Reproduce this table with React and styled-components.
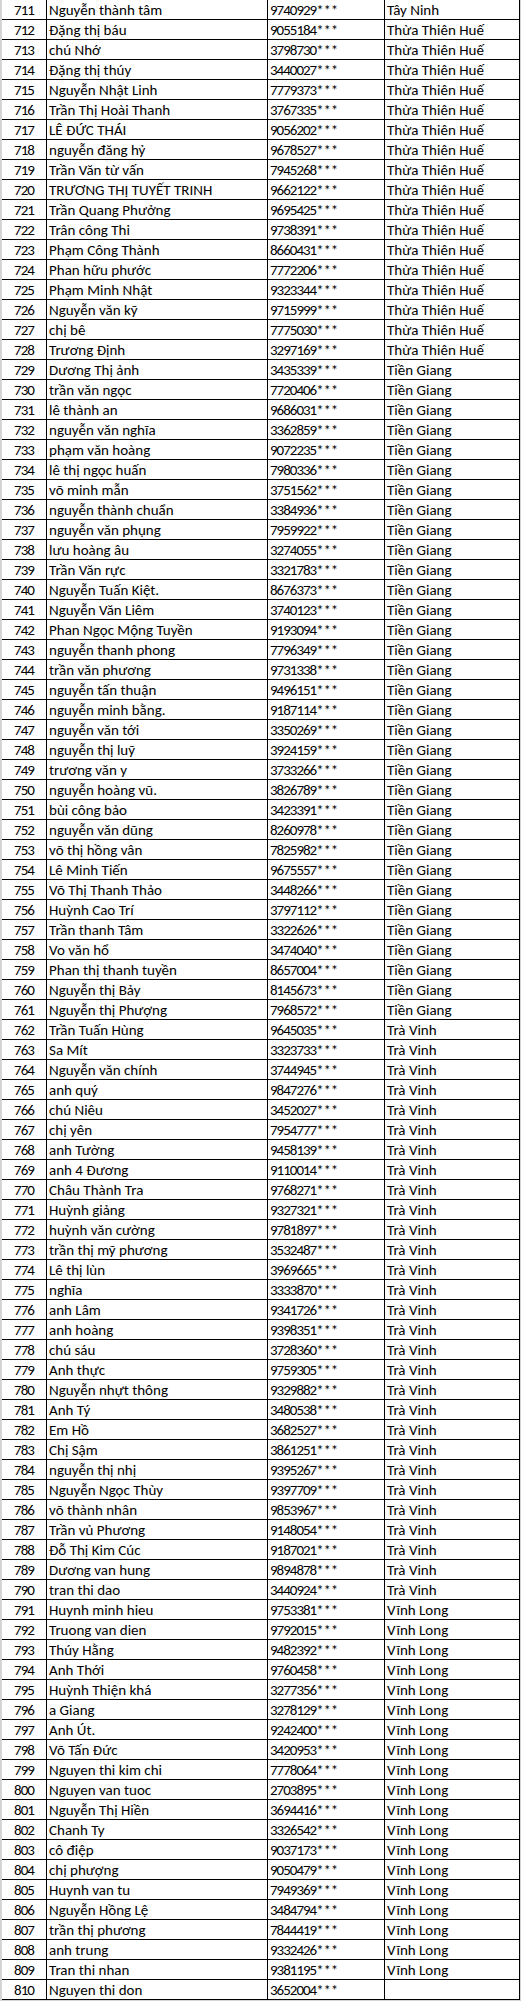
import React from 'react'
import styled, { createGlobalStyle } from 'styled-components'

const GlobalStyle = createGlobalStyle`
  html, body {
    margin: 0;
    padding: 0;
    background: #d4d4d4;
  }
`

const TTH = 'Thừa Thiên Huế'
const TG = 'Tiền Giang'
const TV = 'Trà Vinh'
const VL = 'Vĩnh Long'

// ho ten | so dien thoai (an 3 so cuoi) | tinh ; stt bat dau tu 711
const rows = [
  ['Nguyễn thành tâm', '9740929', 'Tây Ninh'],
  ['Đặng thị báu', '9055184', TTH],
  ['chú Nhớ', '3798730', TTH],
  ['Đặng thị thúy', '3440027', TTH],
  ['Nguyễn Nhật Linh', '7779373', TTH],
  ['Trần Thị Hoài Thanh', '3767335', TTH],
  ['LÊ ĐỨC THÁI', '9056202', TTH],
  ['nguyễn đăng hỷ', '9678527', TTH],
  ['Trần Văn từ vấn', '7945268', TTH],
  ['TRƯƠNG THỊ TUYẾT TRINH', '9662122', TTH],
  ['Trần Quang Phưởng', '9695425', TTH],
  ['Trân công Thi', '9738391', TTH],
  ['Phạm Công Thành', '8660431', TTH],
  ['Phan hữu phước', '7772206', TTH],
  ['Phạm Minh Nhật', '9323344', TTH],
  ['Nguyễn văn kỹ', '9715999', TTH],
  ['chị bê', '7775030', TTH],
  ['Trương Định', '3297169', TTH],
  ['Dương Thị ảnh', '3435339', TG],
  ['trần văn ngọc', '7720406', TG],
  ['lê thành an', '9686031', TG],
  ['nguyễn văn nghĩa', '3362859', TG],
  ['phạm văn hoàng', '9072235', TG],
  ['lê thị ngọc huấn', '7980336', TG],
  ['võ minh mẫn', '3751562', TG],
  ['nguyễn thành chuẩn', '3384936', TG],
  ['nguyễn văn phụng', '7959922', TG],
  ['lưu hoàng âu', '3274055', TG],
  ['Trần Văn rực', '3321783', TG],
  ['Nguyễn Tuấn Kiệt.', '8676373', TG],
  ['Nguyễn Văn Liêm', '3740123', TG],
  ['Phan Ngọc Mộng Tuyền', '9193094', TG],
  ['nguyễn thanh phong', '7796349', TG],
  ['trần văn phương', '9731338', TG],
  ['nguyễn tấn thuận', '9496151', TG],
  ['nguyễn minh bằng.', '9187114', TG],
  ['nguyễn văn tới', '3350269', TG],
  ['nguyễn thị luỹ', '3924159', TG],
  ['trương văn y', '3733266', TG],
  ['nguyễn hoàng vũ.', '3826789', TG],
  ['bùi công bảo', '3423391', TG],
  ['nguyễn văn dũng', '8260978', TG],
  ['võ thị hồng vân', '7825982', TG],
  ['Lê Minh Tiến', '9675557', TG],
  ['Võ Thị Thanh Thảo', '3448266', TG],
  ['Huỳnh Cao Trí', '3797112', TG],
  ['Trần thanh Tâm', '3322626', TG],
  ['Vo văn hổ', '3474040', TG],
  ['Phan thị thanh tuyền', '8657004', TG],
  ['Nguyễn thị Bảy', '8145673', TG],
  ['Nguyễn thị Phượng', '7968572', TG],
  ['Trần Tuấn Hùng', '9645035', TV],
  ['Sa Mít', '3323733', TV],
  ['Nguyễn văn chính', '3744945', TV],
  ['anh quý', '9847276', TV],
  ['chú Niêu', '3452027', TV],
  ['chị yên', '7954777', TV],
  ['anh Tường', '9458139', TV],
  ['anh 4 Đương', '9110014', TV],
  ['Châu Thành Tra', '9768271', TV],
  ['Huỳnh giảng', '9327321', TV],
  ['huỳnh văn cường', '9781897', TV],
  ['trần thị mỹ phương', '3532487', TV],
  ['Lê thị lùn', '3969665', TV],
  ['nghĩa', '3333870', TV],
  ['anh Lâm', '9341726', TV],
  ['anh hoàng', '9398351', TV],
  ['chú sáu', '3728360', TV],
  ['Anh thực', '9759305', TV],
  ['Nguyễn nhựt thông', '9329882', TV],
  ['Anh Tý', '3480538', TV],
  ['Em Hồ', '3682527', TV],
  ['Chị Sậm', '3861251', TV],
  ['nguyễn thị nhị', '9395267', TV],
  ['Nguyễn Ngọc Thùy', '9397709', TV],
  ['võ thành nhân', '9853967', TV],
  ['Trần vủ Phương', '9148054', TV],
  ['Đỗ Thị Kim Cúc', '9187021', TV],
  ['Dương van hung', '9894878', TV],
  ['tran thi dao', '3440924', TV],
  ['Huynh minh hieu', '9753381', VL],
  ['Truong van dien', '9792015', VL],
  ['Thúy Hằng', '9482392', VL],
  ['Anh Thới', '9760458', VL],
  ['Huỳnh Thiện khá', '3277356', VL],
  ['a Giang', '3278129', VL],
  ['Anh Út.', '9242400', VL],
  ['Võ Tấn Đức', '3420953', VL],
  ['Nguyen thi kim chi', '7778064', VL],
  ['Nguyen van tuoc', '2703895', VL],
  ['Nguyễn Thị Hiền', '3694416', VL],
  ['Chanh Ty', '3326542', VL],
  ['cô điệp', '9037173', VL],
  ['chị phượng', '9050479', VL],
  ['Huynh van tu', '7949369', VL],
  ['Nguyễn Hồng Lệ', '3484794', VL],
  ['trần thị phương', '7844419', VL],
  ['anh trung', '9332426', VL],
  ['Tran thi nhan', '9381195', VL],
  ['Nguyen thi don', '3652004', ''],
]

const Sheet = styled.div`
  margin-left: 2px;
  width: 518px;
  background: #fff;
  font-family: Carlito, Calibri, 'Open Sans', sans-serif;
  font-size: 15px;
  color: #000;
`

const Row = styled.div`
  display: grid;
  grid-template-columns: 45px 221px 117px 135px;
  height: 20px;
  border-bottom: 1px solid #000;
  box-sizing: border-box;
`

const Cell = styled.div`
  box-sizing: border-box;
  border-right: 1px solid #000;
  padding: 1px 0 0 ${({ $center }) => ($center ? '0' : '2px')};
  line-height: 19px;
  text-align: ${({ $center }) => ($center ? 'center' : 'left')};
  white-space: nowrap;
  overflow: hidden;
`

// chu so trong excel hep hon mot chut
const Digits = styled.span`
  letter-spacing: -1px;
`

const Stars = styled.span`
  letter-spacing: -0.2px;
`

const App = () => {
  return (
    <>
      <GlobalStyle />
      <Sheet>
        {rows.map(([name, phone, province], i) => (
          <Row key={i}>
            <Cell $center><Digits>{711 + i}</Digits></Cell>
            <Cell>{name}</Cell>
            <Cell><Digits>{phone}</Digits><Stars>***</Stars></Cell>
            <Cell>{province}</Cell>
          </Row>
        ))}
      </Sheet>
    </>
  )
}

export default App
